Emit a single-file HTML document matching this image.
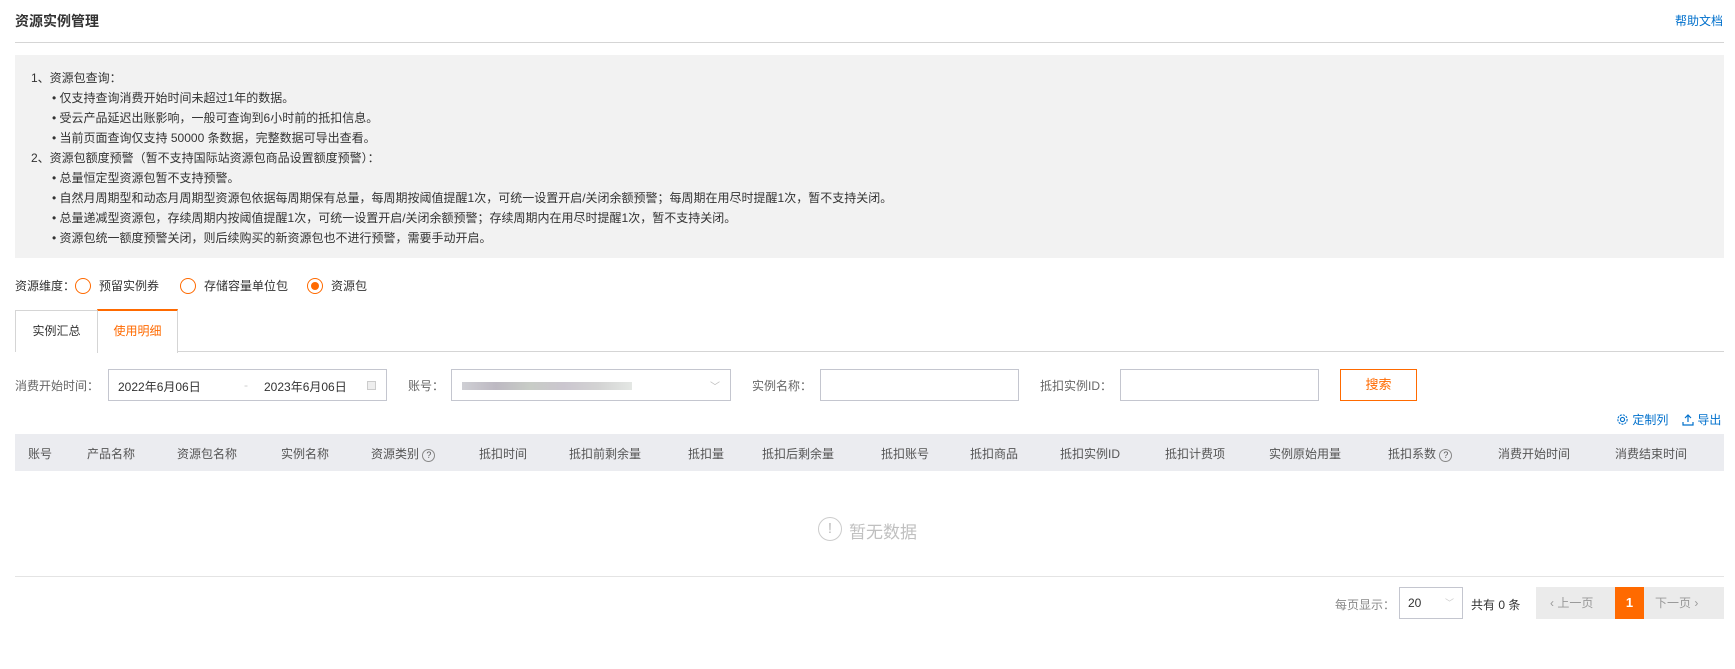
<!DOCTYPE html>
<html><head><meta charset="utf-8"><style>
*{margin:0;padding:0;box-sizing:border-box}
body{width:1735px;height:669px;background:#fff;font-family:"Liberation Sans","Noto Sans CJK SC",sans-serif;font-size:12px;color:#333;position:relative;overflow:hidden}
.a{position:absolute;white-space:nowrap}
.inp{position:absolute;border:1px solid #c4c6cf;background:#fff;height:32px;top:369px}
.th{position:absolute;top:445px;color:#555;font-size:12px}
.rad{position:absolute;top:278px;width:16px;height:16px;border:1px solid #ff6a00;border-radius:50%;background:#fff}
</style></head><body>
<div class="a" style="left:15px;top:11px;font-size:14px;font-weight:bold;color:#333">资源实例管理</div>
<div class="a" style="left:1675px;top:12px;color:#0070cc;font-size:12px">帮助文档</div>
<div class="a" style="left:15px;top:42px;width:1709px;height:1px;background:#d5d5d5"></div>
<div class="a" style="left:15px;top:55px;width:1709px;height:203px;background:#f2f2f2"></div>
<div class="a" style="left:31px;top:68px;line-height:20px;color:#333;font-size:12px">
<div>1、资源包查询：</div>
<div style="padding-left:21px">• 仅支持查询消费开始时间未超过1年的数据。</div>
<div style="padding-left:21px">• 受云产品延迟出账影响，一般可查询到6小时前的抵扣信息。</div>
<div style="padding-left:21px">• 当前页面查询仅支持 50000 条数据，完整数据可导出查看。</div>
<div>2、资源包额度预警（暂不支持国际站资源包商品设置额度预警）：</div>
<div style="padding-left:21px">• 总量恒定型资源包暂不支持预警。</div>
<div style="padding-left:21px">• 自然月周期型和动态月周期型资源包依据每周期保有总量，每周期按阈值提醒1次，可统一设置开启/关闭余额预警；每周期在用尽时提醒1次，暂不支持关闭。</div>
<div style="padding-left:21px">• 总量递减型资源包，存续周期内按阈值提醒1次，可统一设置开启/关闭余额预警；存续周期内在用尽时提醒1次，暂不支持关闭。</div>
<div style="padding-left:21px">• 资源包统一额度预警关闭，则后续购买的新资源包也不进行预警，需要手动开启。</div>
</div>
<div class="a" style="left:15px;top:277px">资源维度：</div>
<div class="rad" style="left:75px"></div><div class="a" style="left:99px;top:277px">预留实例券</div>
<div class="rad" style="left:180px"></div><div class="a" style="left:204px;top:277px">存储容量单位包</div>
<div class="rad" style="left:307px"><div style="position:absolute;left:3px;top:3px;width:8px;height:8px;border-radius:50%;background:#ff6a00"></div></div><div class="a" style="left:331px;top:277px">资源包</div>
<div class="a" style="left:15px;top:351px;width:1709px;height:1px;background:#d5d5d5"></div>
<div class="a" style="left:15px;top:310px;width:83px;height:42px;border:1px solid #d5d5d5;border-bottom:none;background:#fff;text-align:center;line-height:40px">实例汇总</div>
<div class="a" style="left:97px;top:309px;width:81px;height:44px;border:1px solid #d5d5d5;border-top:2px solid #ff6a00;border-bottom:none;background:#fff;text-align:center;line-height:40px;color:#ff6a00">使用明细</div>
<div class="a" style="left:15px;top:377px;color:#666">消费开始时间：</div>
<div class="inp" style="left:108px;width:279px"><span class="a" style="left:9px;top:8px;color:#333">2022年6月06日</span><span class="a" style="left:135px;top:8px;color:#ccc">-</span><span class="a" style="left:155px;top:8px;color:#333">2023年6月06日</span><span class="a" style="left:258px;top:11px;width:9px;height:9px;border:1px solid #ccc;background:#eee"></span></div>
<div class="a" style="left:408px;top:377px;color:#666">账号：</div>
<div class="inp" style="left:451px;width:280px"><span class="a" style="left:10px;top:12px;width:170px;height:8px;background:linear-gradient(90deg,#cfcfd4,#bdb9c2,#c8ccc6,#cbc6cf,#d3d3d3,#e4e7e4)"></span><span class="a" style="right:10px;top:8px;color:#bbb;font-size:10px">﹀</span></div>
<div class="a" style="left:752px;top:377px;color:#666">实例名称：</div>
<div class="inp" style="left:820px;width:199px"></div>
<div class="a" style="left:1040px;top:377px;color:#666">抵扣实例ID：</div>
<div class="inp" style="left:1120px;width:199px"></div>
<div class="a" style="left:1340px;top:369px;width:77px;height:32px;border:1px solid #ff6a00;color:#ff6a00;text-align:center;line-height:30px;font-size:13px">搜索</div>
<div class="a" style="left:1616px;top:411px;color:#0070cc"><svg width="13" height="13" viewBox="0 0 14 14" style="vertical-align:-2px"><circle cx="7" cy="7" r="2.2" fill="none" stroke="#0070cc" stroke-width="1.2"/><circle cx="7" cy="7" r="5" fill="none" stroke="#0070cc" stroke-width="1.2" stroke-dasharray="2.2 1.2"/></svg> 定制列</div>
<div class="a" style="left:1682px;top:411px;color:#0070cc"><svg width="12" height="13" viewBox="0 0 12 13" style="vertical-align:-2px"><path d="M6 9V2M3 5l3-3 3 3M1 9v3h10V9" fill="none" stroke="#0070cc" stroke-width="1.2"/></svg> 导出</div>
<div class="a" style="left:15px;top:434px;width:1709px;height:37px;background:#ebecf0"></div>
<div class="th" style="left:28px">账号</div><div class="th" style="left:87px">产品名称</div><div class="th" style="left:177px">资源包名称</div><div class="th" style="left:281px">实例名称</div><div class="th" style="left:371px">资源类别 <span style="display:inline-block;width:13px;height:13px;border:1px solid #888;border-radius:50%;font-size:9px;line-height:11px;text-align:center;vertical-align:0">?</span></div><div class="th" style="left:479px">抵扣时间</div><div class="th" style="left:569px">抵扣前剩余量</div><div class="th" style="left:688px">抵扣量</div><div class="th" style="left:762px">抵扣后剩余量</div><div class="th" style="left:881px">抵扣账号</div><div class="th" style="left:970px">抵扣商品</div><div class="th" style="left:1060px">抵扣实例ID</div><div class="th" style="left:1165px">抵扣计费项</div><div class="th" style="left:1269px">实例原始用量</div><div class="th" style="left:1388px">抵扣系数 <span style="display:inline-block;width:13px;height:13px;border:1px solid #888;border-radius:50%;font-size:9px;line-height:11px;text-align:center;vertical-align:0">?</span></div><div class="th" style="left:1498px">消费开始时间</div><div class="th" style="left:1615px">消费结束时间</div>
<div class="a" style="left:818px;top:517px;width:24px;height:24px;border:1.5px solid #ccc;border-radius:50%;color:#bbb;text-align:center;line-height:21px;font-size:15px">!</div>
<div class="a" style="left:849px;top:518px;font-size:17px;color:#c0c0c0">暂无数据</div>
<div class="a" style="left:15px;top:576px;width:1709px;height:1px;background:#e4e4e4"></div>
<div class="a" style="left:1335px;top:596px;color:#888">每页显示：</div>
<div class="a" style="left:1399px;top:587px;width:64px;height:32px;border:1px solid #c4c6cf;line-height:30px;padding-left:8px">20<span style="position:absolute;right:8px;color:#ccc;font-size:9px">﹀</span></div>
<div class="a" style="left:1471px;top:596px">共有 0 条</div>
<div class="a" style="left:1536px;top:587px;width:188px;height:32px;background:#ebebeb;color:#999;line-height:32px"><span class="a" style="left:14px">‹ 上一页</span><span class="a" style="left:79px;width:29px;height:32px;background:#ff6a00;color:#fff;text-align:center;font-weight:bold;font-size:13px">1</span><span class="a" style="left:119px">下一页 ›</span></div>
</body></html>
